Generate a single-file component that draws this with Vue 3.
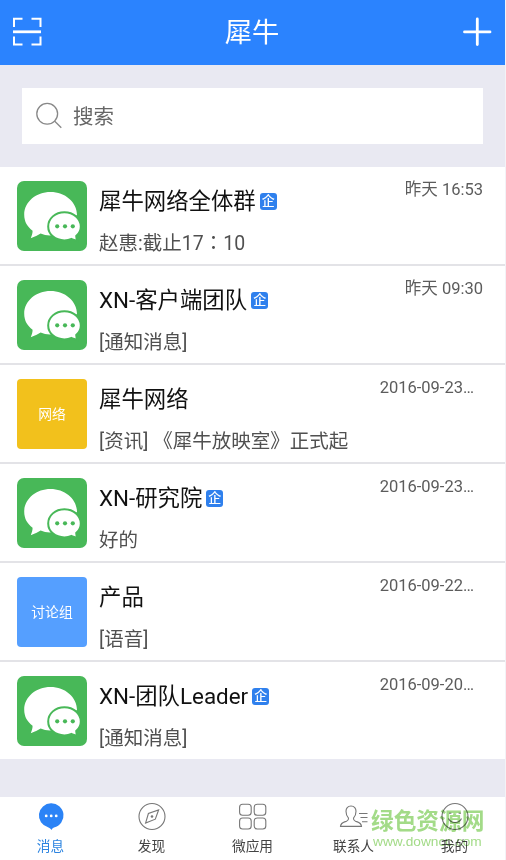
<template>
  <div class="page">
    <header class="header">
      <svg class="header-icon" width="30" height="30" viewBox="0 0 30 30">
        <path d="M2 10V1.700H10.500M19.500 1.700H28.500V10M2 19.500V27.500H10.500M19.500 27.500H28.500V19.500" />
        <path class="thick" d="M1 14.800H29" />
      </svg>
      <h1 class="header-title">犀牛</h1>
      <svg class="header-icon" width="30" height="30" viewBox="0 0 30 30">
        <path class="thick round" d="M2.500 14.900H28M15.300 2V27.500" />
      </svg>
    </header>

    <div class="search-wrap">
      <div class="search">
        <svg class="search-icon" width="28" height="28" viewBox="0 0 28 28">
          <circle cx="12.2" cy="11.8" r="10.4" />
          <path d="M19.500 19L26.300 25.800" />
        </svg>
        <span class="search-text">搜索</span>
      </div>
    </div>

    <main class="list">
      <div v-for="chat in chats" :key="chat.id" class="row">
        <div class="avatar" :class="chat.type">
          <svg v-if="chat.type === 'group'" width="70" height="70" viewBox="0 0 70 70">
            <path
              class="bubble"
              d="M33.5 11C19 11 7.2 21 7.2 33.6C7.2 41 10.5 46 15.6 49.8C15.6 52.4 14.8 54.6 13.8 57.2C17.8 56 20.8 54.2 23.6 52.6C27.4 54.2 31 54.7 36 54.3L60 34C60 21 48 11 33.5 11Z"
            />
            <path
              class="bubble small"
              d="M47.4 31.2C38.2 31.200 31.200 37.600 31.200 45.400C31.200 53.200 38.200 59.400 47.400 59.400C50 59.400 52.200 59 54.500 57.900C56.200 58.400 57.800 59.200 60.200 60C59.600 58.200 59.300 56.600 59.200 55C62.200 52.500 63.800 49.300 63.800 45.400C63.800 37.600 56.500 31.200 47.400 31.200Z"
            />
            <circle cx="40.2" cy="45.3" r="2.1" />
            <circle cx="48" cy="45.3" r="2.1" />
            <circle cx="55.8" cy="45.3" r="2.1" />
          </svg>
          <span v-else class="avatar-text">{{ chat.avatarText }}</span>
        </div>
        <div class="info">
          <div class="name">
            <span>{{ chat.name }}</span>
            <i v-if="chat.type === 'group'" class="badge">企</i>
          </div>
          <div class="message">
            <template v-for="(part, i) in chat.message.split('：')" :key="i">
              <span v-if="i > 0" class="colon">：</span>{{ part }}
            </template>
          </div>
        </div>
        <div class="time" :class="{ date: chat.isDate }">{{ chat.time }}</div>
      </div>
    </main>

    <nav class="tabs">
      <div
        v-for="tab in tabs"
        :key="tab.key"
        class="tab"
        :class="{ active: tab.key === current }"
        @click="current = tab.key"
      >
        <svg class="tab-icon" width="30" height="28" viewBox="0 0 30 28">
          <template v-if="tab.key === 'message'">
            <path
              class="solid"
              d="M15 1.3A12.2 12.2 0 0 0 12 25.3C13.4 25.8 14.4 26.8 15.6 28C16 26.8 16.6 25.8 18 25.4A12.2 12.2 0 0 0 15 1.3Z"
            />
            <circle class="dot" cx="10.2" cy="13.9" r="1.4" />
            <circle class="dot" cx="15.2" cy="13.9" r="1.4" />
            <circle class="dot" cx="20.2" cy="13.9" r="1.4" />
          </template>
          <template v-else-if="tab.key === 'find'">
            <circle cx="15" cy="14.5" r="13" />
            <path d="M21.6 8L18.3 17.2L8.6 21L11.4 11.5Z" />
            <circle class="pin" cx="15" cy="14.5" r="1.3" />
          </template>
          <template v-else-if="tab.key === 'apps'">
            <rect x="1.6" y="2.3" width="11.6" height="11" rx="3" />
            <rect x="16.2" y="2.3" width="11.6" height="11" rx="3" />
            <rect x="1.6" y="16" width="11.6" height="11" rx="3" />
            <rect x="16.2" y="16" width="11.6" height="11" rx="3" />
          </template>
          <template v-else-if="tab.key === 'contacts'">
            <path
              d="M12 4C8.600 4 7 6.300 7 9.200C7 12.300 8.100 14.800 9.500 16.200C9.700 18 9.200 18.500 7.500 19.200C4.500 20.300 1.800 20.600 1.500 24.400H22.500C22.200 20.600 19.500 20.300 16.500 19.200C14.800 18.500 14.300 18 14.500 16.200C15.900 14.800 17 12.300 17 9.200C17 6.300 15.400 4 12 4Z"
            />
            <path d="M20 11.500H28.500M21.500 15.500H28.500M23 19.700H28.500" />
          </template>
          <template v-else>
            <circle cx="15" cy="14.500" r="13" />
            <path d="M8.500 16.500C11 21.800 19 21.800 21.500 16.500" />
            <path d="M9 11.300H11.400M18.600 11.300H21" />
          </template>
        </svg>
        <span class="tab-label">{{ tab.label }}</span>
      </div>
    </nav>

    <div class="watermark">
      <div class="watermark-name">绿色资源网</div>
      <div class="watermark-url">www.downcc.com</div>
    </div>
  </div>
</template>

<script setup>
import { ref } from "vue";

const current = ref("message");

const chats = [
  { id: 1, type: "group", name: "犀牛网络全体群", message: "赵惠:截止17：10", time: "昨天 16:53" },
  { id: 2, type: "group", name: "XN-客户端团队", message: "[通知消息]", time: "昨天 09:30" },
  {
    id: 3,
    type: "network",
    avatarText: "网络",
    name: "犀牛网络",
    message: "[资讯] 《犀牛放映室》正式起",
    time: "2016-09-23…",
    isDate: true,
  },
  { id: 4, type: "group", name: "XN-研究院", message: "好的", time: "2016-09-23…", isDate: true },
  {
    id: 5,
    type: "discuss",
    avatarText: "讨论组",
    name: "产品",
    message: "[语音]",
    time: "2016-09-22…",
    isDate: true,
  },
  { id: 6, type: "group", name: "XN-团队Leader", message: "[通知消息]", time: "2016-09-20…", isDate: true },
];

const tabs = [
  { key: "message", label: "消息" },
  { key: "find", label: "发现" },
  { key: "apps", label: "微应用" },
  { key: "contacts", label: "联系人" },
  { key: "mine", label: "我的" },
];
</script>

<style>
body {
  margin: 0;
  background: #fff;
}
</style>

<style scoped>
.page {
  position: relative;
  display: flex;
  flex-direction: column;
  box-sizing: border-box;
  width: 506px;
  height: 860px;
  overflow: hidden;
  background: #e9e9f2;
  border-right: 1px solid #f3f3f7;
  font-family: Roboto, "Noto Sans CJK SC", sans-serif;
}

.header {
  flex: none;
  display: flex;
  align-items: center;
  justify-content: space-between;
  box-sizing: border-box;
  height: 65px;
  padding: 0 13px 1px 12px;
  background: #2b83fe;
}

.header-icon {
  fill: none;
  stroke: #fff;
  stroke-width: 2;
}

.header-icon .thick {
  stroke-width: 2.8;
}

.header-icon .round {
  stroke-linecap: round;
}

.header-title {
  margin: 0;
  padding-top: 2px;
  color: #fff;
  font-size: 27.3px;
  font-weight: 400;
  line-height: 62px;
}

.search-wrap {
  flex: none;
  box-sizing: border-box;
  height: 102px;
  padding: 22.5px 22px 0;
}

.search {
  display: flex;
  align-items: center;
  height: 56px;
  padding-left: 13px;
  background: #fff;
  color: #666;
  font-size: 20.5px;
}

.search-icon {
  margin-right: 10px;
  fill: none;
  stroke: #888;
  stroke-width: 1.3;
}

.search-text {
  padding-bottom: 2px;
}

.list {
  flex: none;
  height: 592px;
  overflow: hidden;
  background: #fff;
}

.row {
  display: flex;
  box-sizing: border-box;
  height: 99px;
  padding: 14px 22px 0 17px;
  border-bottom: 2px solid #e3e3e7;
}

.row:last-child {
  border-bottom: none;
}

.avatar {
  flex: none;
  display: flex;
  align-items: center;
  justify-content: center;
  width: 70px;
  height: 70px;
  border-radius: 4px;
  color: #fff;
  font-size: 13.8px;
}

.avatar-text {
  padding-bottom: 2px;
}

.avatar.group {
  border-radius: 7px;
  background: #48b858;
}

.avatar.network {
  background: #f2c11c;
}

.avatar.discuss {
  background: #559fff;
}

.avatar svg {
  fill: #48b858;
}

.avatar .bubble {
  fill: #fff;
}

.avatar .small {
  stroke: #48b858;
  stroke-width: 2;
}

.info {
  flex: 1;
  min-width: 0;
  padding-left: 12px;
  white-space: nowrap;
}

.name {
  display: flex;
  align-items: center;
  height: 41px;
  color: #111;
  font-size: 22.4px;
  line-height: 41px;
}

.badge {
  width: 17px;
  height: 17px;
  margin-left: 4px;
  border-radius: 3px;
  background: #2f80ed;
  color: #fff;
  font-size: 13px;
  font-style: normal;
  font-weight: 500;
  line-height: 16px;
  text-align: center;
}

.message {
  height: 40px;
  color: #505050;
  font-size: 19.5px;
  line-height: 44px;
}

/* the Traditional Chinese face centres the full-width colon */
.colon {
  font-family: "Noto Sans CJK TC", sans-serif;
  line-height: 1;
}

.time {
  flex: none;
  height: 18px;
  color: #5c5c5c;
  font-size: 16.5px;
  line-height: 18px;
}

.time.date {
  padding-right: 9px;
}

.tabs {
  flex: none;
  display: flex;
  height: 63px;
  margin-top: auto;
  background: #fff;
}

.tab {
  flex: 1;
  display: flex;
  flex-direction: column;
  align-items: center;
  padding-top: 5px;
  color: #444;
}

.tab-icon {
  overflow: visible;
  fill: none;
  stroke: #777;
  stroke-width: 1.1;
}

.tab-icon .solid {
  fill: #2b83f6;
  stroke: none;
}

.tab-icon .dot {
  fill: #fff;
  stroke: none;
}

.tab-icon .pin {
  fill: #777;
  stroke: none;
}

.tab-label {
  margin-top: 7px;
  font-size: 13.7px;
  line-height: 18px;
}

.tab.active .tab-label {
  color: #2b83e0;
}

.watermark {
  position: absolute;
  left: 371px;
  top: 808px;
  color: #a3db88;
  mix-blend-mode: multiply;
  white-space: nowrap;
  pointer-events: none;
}

.watermark-name {
  height: 28px;
  font-size: 22.7px;
  font-weight: 700;
  line-height: 28px;
}

.watermark-url {
  padding-left: 2px;
  font-family: "Liberation Sans", sans-serif;
  font-size: 13.7px;
  line-height: 12px;
}
</style>
